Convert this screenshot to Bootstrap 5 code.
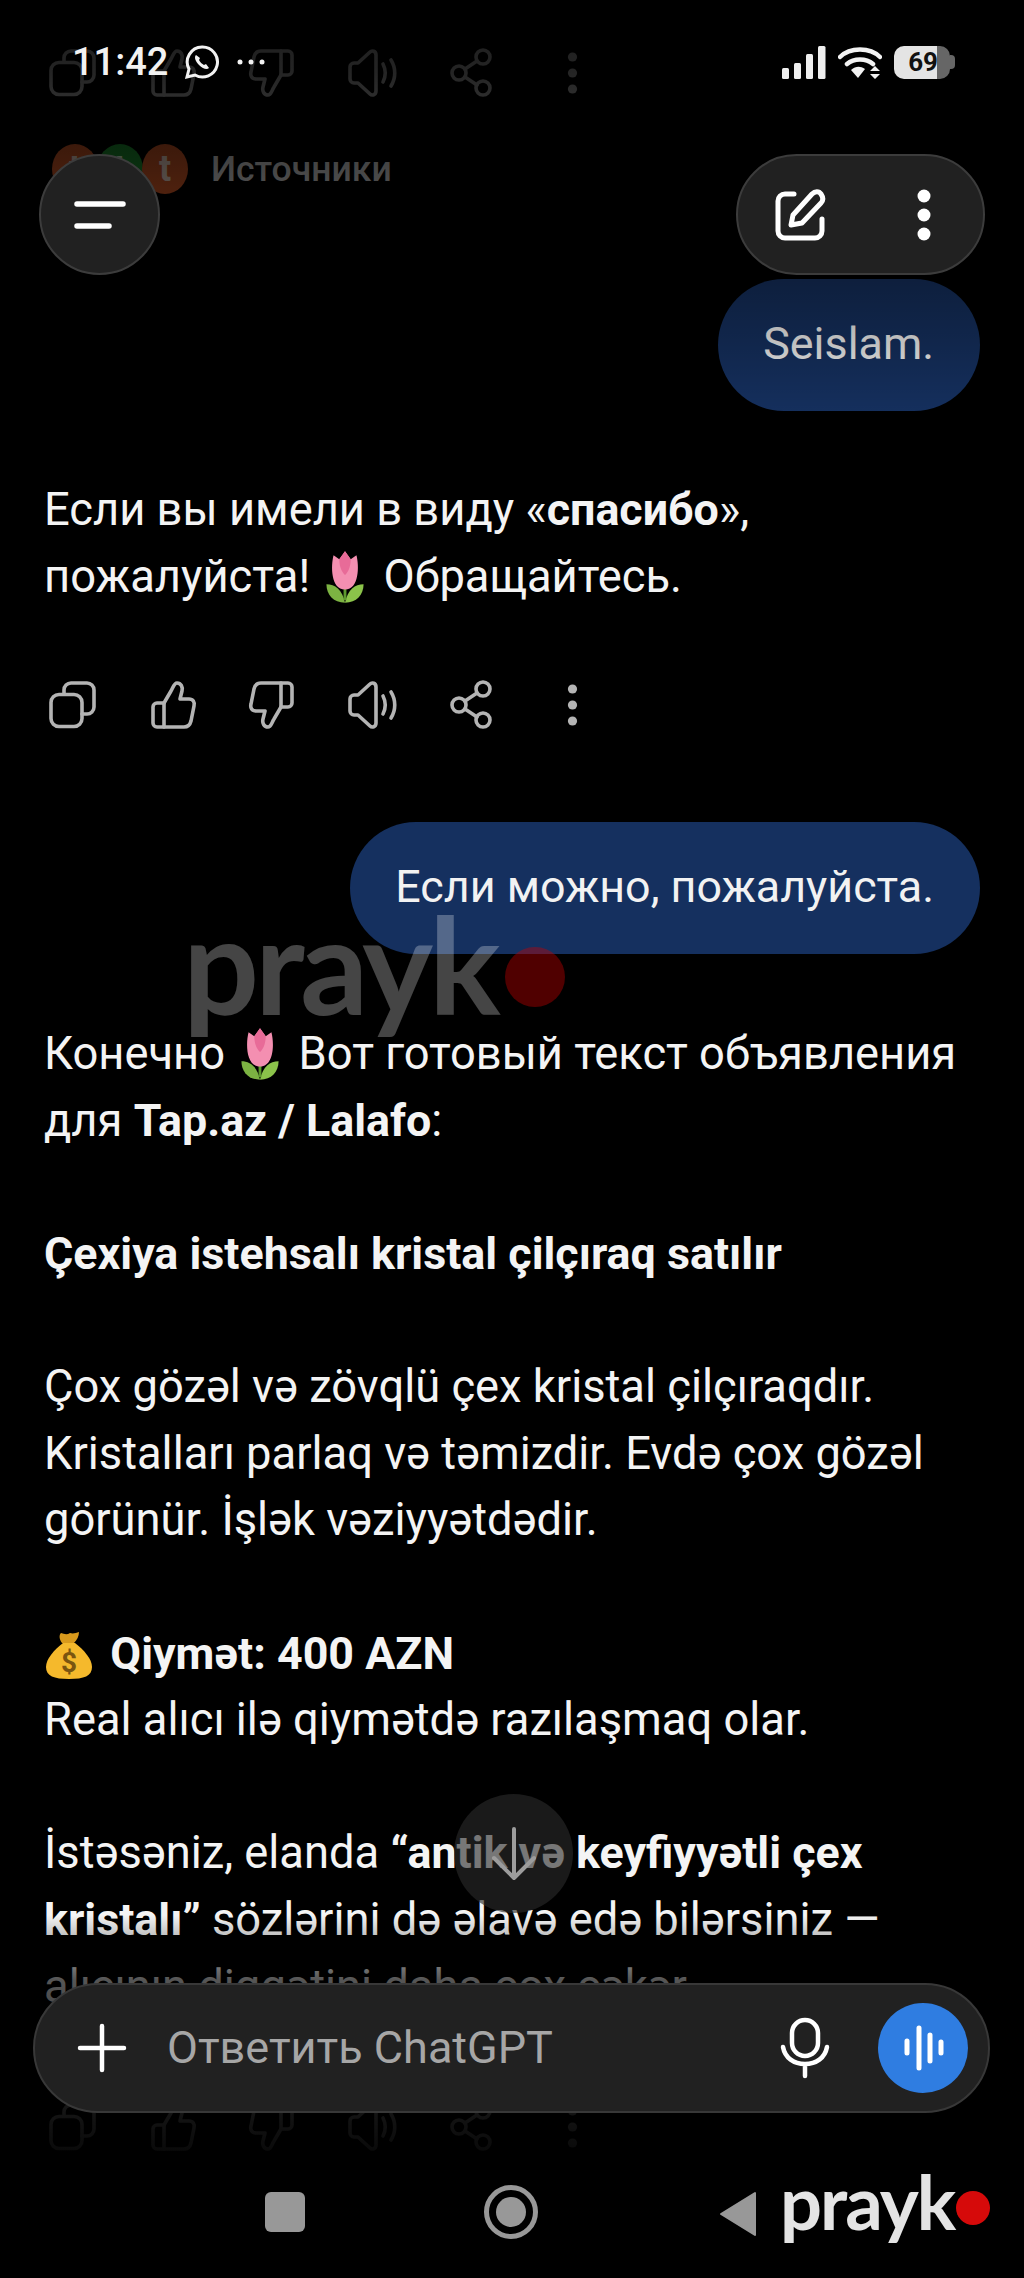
<!DOCTYPE html>
<html lang="ru">
<head>
    <meta charset="UTF-8">
    <meta name="viewport" content="width=device-width, initial-scale=1.0">
    <link href="https://cdn.jsdelivr.net/npm/bootstrap@5.3.3/dist/css/bootstrap.min.css" rel="stylesheet">
    <title>ChatGPT</title>
    <style>
        body { background: #000; margin: 0; }
        .phone {
            width: 1024px; height: 2278px; background: #000; overflow: hidden;
            font-family: Roboto, "Liberation Sans", sans-serif; color: #f4f4f4;
        }
        .chat { padding: 47px 44px 0; font-size: 45.3px; line-height: 66.6px; }
        .chat p { margin: 0 0 66.6px; }
        .chat b { font-weight: 700; font-size: 44.8px; }

        .tools { height: 52px; gap: 47.5px; margin-left: 3px; }
        .tools svg { width: 52px; height: 52px; fill: none; stroke: #b4b4b4; stroke-width: 3.6; stroke-linejoin: round; stroke-linecap: round; }
        .tools svg .dotfill { fill: #b4b4b4; stroke: none; }
        .tools-end { margin-top: 81px; }

        .sources { height: 50px; margin: 45px 0 85px 8px; }
        .avatar { width: 46px; height: 50px; border-radius: 50%; font-size: 36px; font-weight: 700; line-height: 50px; text-align: center; color: #c9b4a8; margin-right: -1px; }
        .av-red { background: #b04a20; }
        .av-green { background: #187a28; color: #b4d0b4; }
        .sources span.label { font-size: 35.5px; font-weight: 500; color: #b4b4b4; margin-left: 24px; line-height: 50px; }

        .bubble { background: #15305f; height: 132px; padding: 0 46px 0 45px; font-size: 44.8px; line-height: 130px; color: #f2f2f2; }
        .bubble-first { margin-bottom: 66px; }
        .bubble-second { margin-top: 91px; margin-bottom: 67px; }

        .emo { display: inline-block; vertical-align: -12px; }
        .emo-tulip { margin: 0 7px 0 4px; }
        .emo-bag { margin-right: 5px; }

        .fade-top, .fade-bottom { left: 0; width: 1024px; pointer-events: none; }
        .fade-top { top: 0; height: 420px; background: linear-gradient(to bottom, rgba(0,0,0,.86) 0, rgba(0,0,0,.8) 72px, rgba(0,0,0,.62) 166px, rgba(0,0,0,.36) 279px, rgba(0,0,0,.2) 345px, rgba(0,0,0,0) 420px); }
        .fade-bottom { top: 1915px; height: 363px; background: linear-gradient(to bottom, rgba(0,0,0,0) 0, rgba(0,0,0,.65) 65px, rgba(0,0,0,.9) 205px, #000 275px); }

        .status { top: 42px; left: 72px; width: 883px; height: 40px; }
        .clock { font-size: 38px; font-weight: 500; line-height: 40px; color: #f2f2f2; }
        .status-right { gap: 12px; }
        .batt { width: 56px; height: 33px; background: linear-gradient(to right, #e4e4e4 43px, #666 43px); border-radius: 10px; color: #111; font-size: 26px; font-weight: 700; line-height: 33px; text-align: right; padding-right: 12px; }
        .batt-tip { width: 5px; height: 14px; background: #666; border-radius: 0 4px 4px 0; }

        .fab { background: #212121; border: 2px solid #3c3c3c; }
        .menu-btn { top: 154px; left: 39px; width: 121px; height: 121px; }
        .top-pill { top: 154px; left: 736px; width: 249px; height: 121px; padding: 0 51px 0 36px; }
        .down-btn { top: 1794px; left: 454px; width: 119px; height: 119px; background: rgba(42,42,42,.62); }

        .composer { top: 1983px; left: 33px; width: 957px; height: 130px; padding: 0 20px 0 42px; background: #212121; border: 2px solid #383838; }
        .composer-text { font-size: 45px; color: #a6a6a6; margin-left: 40px; }
        .voice { width: 90px; height: 90px; background: #2f7de1; }

        .sysnav { top: 2182px; left: 265px; height: 60px; }
        .nav-square { width: 40px; height: 40px; background: #989898; border-radius: 6px; }
        .nav-round { width: 54px; height: 54px; border: 5px solid #989898; margin-left: 179px; }
        .nav-round i { display: block; width: 30px; height: 30px; background: #989898; }

        .wm { font-family: Lato, "Open Sans", sans-serif; font-weight: 700; line-height: 1; white-space: nowrap; }
        .wm-dim { top: 897px; left: 183px; font-size: 134px; letter-spacing: -4px; color: rgba(255,255,255,.27); }
        .wm-dot-dim { top: 947px; left: 505px; width: 60px; height: 60px; background: rgba(200,0,0,.4); }
        .wm-solid { top: 2165px; left: 780px; font-size: 74px; letter-spacing: -2px; color: #e4e4e4; }
        .wm-dot-solid { top: 2191px; left: 956px; width: 34px; height: 34px; background: #d60a0a; }
    </style>
</head>
<body>
<svg width="0" height="0" class="position-absolute">
    <defs>
        <g id="ic-copy">
            <rect x="4" y="15.5" width="31" height="32" rx="8"/>
            <path d="M17 15v-4a7 7 0 0 1 7-7h16a7 7 0 0 1 7 7v17a7 7 0 0 1-7 7h-5"/>
        </g>
        <g id="ic-thumb">
            <path d="M6 28a4 4 0 0 1 4-4h7v24h-7a4 4 0 0 1-4-4z"/>
            <path d="M17 24l7-12c2-3 3-8 6-8 4 0 6 4 5 8l-2 8h9c4 0 6 3 5 7l-3 15c-1 4-3 6-7 6H17"/>
        </g>
        <g id="ic-speaker">
            <path d="M4 20a4 4 0 0 1 4-4h4l12-11c2-2 6-1 6 3v36c0 4-4 5-6 3L12 36H8a4 4 0 0 1-4-4z"/>
            <path d="M37 17c3 6 3 12 0 18M45 13c5 8 5 18 0 26"/>
        </g>
        <g id="ic-share">
            <circle cx="14" cy="26" r="7"/><circle cx="38" cy="10" r="7"/><circle cx="38" cy="41" r="7"/>
            <path d="M20 22l12-8M20 30l12 8"/>
        </g>
        <g id="ic-tulip">
            <path d="M4 29c6 0 11 4 13 14-8 0-13-6-13-14z" fill="#7cb342"/>
            <path d="M30 29c-6 0-11 4-13 14 8 0 13-6 13-14z" fill="#8bc34a"/>
            <path d="M17 41v-10" stroke="#5d9a2e" stroke-width="2"/>
            <path d="M9 7l4 3 4-6 4 6 4-3c2 8 2 26-8 26S7 15 9 7z" fill="#f48fb1"/>
            <path d="M17 4l4 6c0 6-2 10-4 12-2-2-4-6-4-12z" fill="#e86b98"/>
        </g>
    </defs>
</svg>

<div class="phone position-relative">
    <div class="chat">
        <div class="tools d-flex align-items-center">
            <svg viewBox="0 0 52 52"><use href="#ic-copy"/></svg>
            <svg viewBox="0 0 52 52"><use href="#ic-thumb"/></svg>
            <svg viewBox="0 0 52 52"><use href="#ic-thumb" transform="rotate(180 26 26)"/></svg>
            <svg viewBox="0 0 52 52"><use href="#ic-speaker"/></svg>
            <svg viewBox="0 0 52 52"><use href="#ic-share"/></svg>
            <svg viewBox="0 0 52 52"><circle class="dotfill" cx="27.5" cy="10" r="4.6"/><circle class="dotfill" cx="27.5" cy="26" r="4.6"/><circle class="dotfill" cx="27.5" cy="42" r="4.6"/></svg>
        </div>
        <div class="sources d-flex">
            <div class="avatar av-red">t</div>
            <div class="avatar av-green">t</div>
            <div class="avatar av-red">t</div>
            <span class="label">Источники</span>
        </div>
        <div class="d-flex justify-content-end"><div class="bubble rounded-pill bubble-first">Seislam.</div></div>

        <p style="margin-bottom:0">Если вы имели в виду «<b>спасибо</b>»,<br>пожалуйста! <svg class="emo emo-tulip" width="40" height="54" viewBox="3 3 28 41" preserveAspectRatio="none"><use href="#ic-tulip"/></svg> Обращайтесь.</p>

        <div class="tools d-flex align-items-center" style="margin-top:69px">
            <svg viewBox="0 0 52 52"><use href="#ic-copy"/></svg>
            <svg viewBox="0 0 52 52"><use href="#ic-thumb"/></svg>
            <svg viewBox="0 0 52 52"><use href="#ic-thumb" transform="rotate(180 26 26)"/></svg>
            <svg viewBox="0 0 52 52"><use href="#ic-speaker"/></svg>
            <svg viewBox="0 0 52 52"><use href="#ic-share"/></svg>
            <svg viewBox="0 0 52 52"><circle class="dotfill" cx="27.5" cy="10" r="4.6"/><circle class="dotfill" cx="27.5" cy="26" r="4.6"/><circle class="dotfill" cx="27.5" cy="42" r="4.6"/></svg>
        </div>

        <div class="d-flex justify-content-end"><div class="bubble rounded-pill bubble-second">Если можно, пожалуйста.</div></div>

        <p>Конечно <svg class="emo emo-tulip" width="40" height="54" viewBox="3 3 28 41" preserveAspectRatio="none"><use href="#ic-tulip"/></svg> Вот готовый текст объявления<br>для <b>Tap.az / Lalafo</b>:</p>
        <p><b>Çexiya istehsalı kristal çilçıraq satılır</b></p>
        <p>Çox gözəl və zövqlü çex kristal çilçıraqdır.<br>Kristalları parlaq və təmizdir. Evdə çox gözəl<br>görünür. İşlək vəziyyətdədir.</p>
        <p><svg class="emo emo-bag" width="50" height="50" viewBox="0 0 50 50">
            <path d="M18 12c-3-4-3-8-1-10 3 1 6 2 9 0 3 1 6 0 9-1 0 4-2 8-5 11z" fill="#d99a1c"/>
            <path d="M19 12h12c9 7 17 16 17 24 0 9-8 12-23 12S2 45 2 36c0-8 8-17 17-24z" fill="#f5b92c"/>
            <text x="25" y="41" font-size="28" font-weight="700" text-anchor="middle" fill="#7a5510" font-family="Roboto, sans-serif">$</text>
        </svg> <b>Qiymət: 400 AZN</b><br>Real alıcı ilə qiymətdə razılaşmaq olar.</p>
        <p style="margin-bottom:0">İstəsəniz, elanda <b>“antik və keyfiyyətli çex</b><br><b>kristalı”</b> sözlərini də əlavə edə bilərsiniz —<br>alıcının diqqətini daha çox çəkər.</p>

        <div class="tools tools-end d-flex align-items-center">
            <svg viewBox="0 0 52 52"><use href="#ic-copy"/></svg>
            <svg viewBox="0 0 52 52"><use href="#ic-thumb"/></svg>
            <svg viewBox="0 0 52 52"><use href="#ic-thumb" transform="rotate(180 26 26)"/></svg>
            <svg viewBox="0 0 52 52"><use href="#ic-speaker"/></svg>
            <svg viewBox="0 0 52 52"><use href="#ic-share"/></svg>
            <svg viewBox="0 0 52 52"><circle class="dotfill" cx="27.5" cy="10" r="4.6"/><circle class="dotfill" cx="27.5" cy="26" r="4.6"/><circle class="dotfill" cx="27.5" cy="42" r="4.6"/></svg>
        </div>
    </div>

    <!-- scroll fades over the chat -->
    <div class="fade-top position-absolute"></div>
    <div class="fade-bottom position-absolute"></div>

    <!-- watermark in the middle -->
    <div class="wm wm-dim position-absolute">prayk</div>
    <div class="wm-dot-dim rounded-circle position-absolute"></div>

    <!-- status bar -->
    <div class="status position-absolute d-flex align-items-center">
        <span class="clock">11:42</span>
        <svg class="ms-3" width="36" height="36" viewBox="0 0 36 36" fill="none" stroke="#f2f2f2" stroke-width="3">
            <path d="M18 3a15 15 0 0 0-13 22L3 33l8-2a15 15 0 1 0 7-28z"/>
            <path d="M12 11c-2 2-1 6 3 10s8 5 10 3l-3-4-2 1c-2-1-4-3-5-5l1-2z" fill="#f2f2f2" stroke="none"/>
        </svg>
        <svg class="ms-3" width="32" height="8" viewBox="0 0 32 8" fill="#f2f2f2"><circle cx="4" cy="4" r="2.5"/><circle cx="15" cy="4" r="2.5"/><circle cx="26" cy="4" r="2.5"/></svg>
        <div class="status-right ms-auto d-flex align-items-center">
            <svg width="44" height="33" viewBox="0 0 44 33" fill="#efefef">
                <rect x="0" y="22" width="7" height="11" rx="1.5"/><rect x="12" y="17" width="7" height="16" rx="1.5"/><rect x="24" y="8" width="7" height="25" rx="1.5"/><rect x="36" y="0" width="7.5" height="33" rx="1.5"/>
            </svg>
            <svg width="44" height="33" viewBox="0 0 44 33" fill="none" stroke="#f2f2f2" stroke-width="4.5" stroke-linecap="round">
                <path d="M2 11c10-10 30-10 40 0M9 18c7-6 19-6 26 0"/>
                <path d="M13 24c5-4 9-4 14-1l-7 9z" fill="#f2f2f2" stroke="none"/>
                <path d="M37 20l5 5h-10zM37 33l5-5h-10z" fill="#f2f2f2" stroke="none"/>
            </svg>
            <div class="d-flex align-items-center">
                <div class="batt">69</div>
                <div class="batt-tip"></div>
            </div>
        </div>
    </div>

    <!-- top floating buttons -->
    <div class="fab menu-btn rounded-circle position-absolute d-flex align-items-center justify-content-center">
        <svg width="52" height="30" viewBox="0 0 52 30" stroke="#fff" stroke-width="5.5" stroke-linecap="round"><path d="M3 4h46M3 26h32"/></svg>
    </div>
    <div class="fab top-pill rounded-pill position-absolute d-flex align-items-center justify-content-between">
        <svg width="54" height="54" viewBox="0 0 54 54" fill="none" stroke="#fff" stroke-width="5" stroke-linejoin="round" stroke-linecap="round">
            <path d="M20 6H11a7 7 0 0 0-7 7v30a7 7 0 0 0 7 7h30a7 7 0 0 0 7-7v-12"/>
            <path d="M17 37l2-10L38 6c3-3 7-3 9 0s3 6 0 9L28 35z"/>
        </svg>
        <svg width="16" height="54" viewBox="0 0 16 54" fill="#fff"><circle cx="8" cy="8" r="6.5"/><circle cx="8" cy="27" r="6.5"/><circle cx="8" cy="46" r="6.5"/></svg>
    </div>

    <!-- scroll to bottom -->
    <div class="down-btn rounded-circle position-absolute d-flex align-items-center justify-content-center">
        <svg width="46" height="56" viewBox="0 0 46 56" fill="none" stroke="#9c9c9c" stroke-width="4" stroke-linecap="round" stroke-linejoin="round"><path d="M23 3v49M3 32l20 20 20-20"/></svg>
    </div>

    <!-- composer -->
    <div class="composer rounded-pill position-absolute d-flex align-items-center">
        <svg width="50" height="50" viewBox="0 0 50 50" stroke="#fff" stroke-width="4.5" stroke-linecap="round"><path d="M25 3v44M3 25h44"/></svg>
        <span class="composer-text">Ответить ChatGPT</span>
        <svg class="ms-auto me-5" width="50" height="62" viewBox="0 0 50 62" fill="none" stroke="#fff" stroke-width="4.5" stroke-linecap="round">
            <rect x="12" y="3" width="26" height="36" rx="13"/>
            <path d="M3 30c2 11 11 17 22 17s20-6 22-17M25 47v12"/>
        </svg>
        <div class="voice rounded-circle d-flex align-items-center justify-content-center">
            <svg width="42" height="46" viewBox="0 0 42 46" stroke="#fff" stroke-width="5" stroke-linecap="round"><path d="M5 16v12M17 3v40M28 10v26M39 17v11"/></svg>
        </div>
    </div>

    <!-- android navigation -->
    <div class="sysnav position-absolute d-flex align-items-center">
        <div class="nav-square"></div>
        <div class="nav-round rounded-circle d-flex align-items-center justify-content-center"><i class="rounded-circle"></i></div>
        <svg width="38" height="46" viewBox="0 0 38 46" fill="#989898" class="position-absolute" style="left:454px;top:9px"><path d="M36 2v42L2 23z" stroke="#989898" stroke-width="2" stroke-linejoin="round"/></svg>
    </div>

    <div class="wm wm-solid position-absolute">prayk</div>
    <div class="wm-dot-solid rounded-circle position-absolute"></div>
</div>
<script src="https://cdn.jsdelivr.net/npm/bootstrap@5.3.3/dist/js/bootstrap.bundle.min.js"></script>
</body>
</html>
